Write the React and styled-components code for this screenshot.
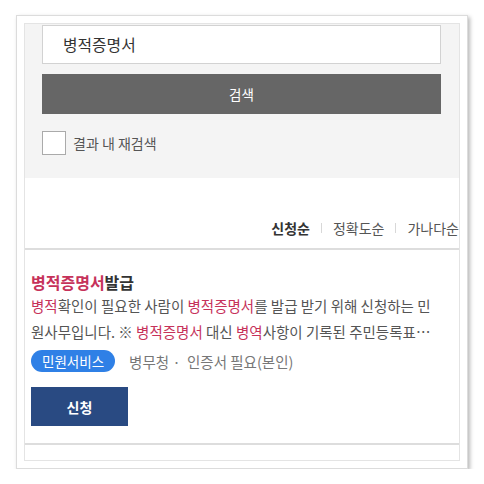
import React from "react";
import styled, { createGlobalStyle } from "styled-components";

const Global = createGlobalStyle`
  html, body {
    margin: 0;
    padding: 0;
    background: #fff;
  }
  body {
    font-family: "Noto Sans CJK KR", "Noto Sans", sans-serif;
    color: #333;
  }
`;

const Frame = styled.div`
  box-sizing: border-box;
  margin: 15px 0 0 16px;
  width: 452px;
  height: 454px;
  padding: 7px;
  background: #fff;
  border: 1px solid #dcdcdc;
  box-shadow: 2px 2px 4px rgba(0, 0, 0, 0.28);
`;

const Inner = styled.div`
  box-sizing: border-box;
  height: 438px;
  border: 1px solid #e4e4e4;
  overflow: hidden;
  display: flex;
  flex-direction: column;
`;

const SearchPanel = styled.div`
  background: #f4f4f4;
  padding: 1px 18px 23px 17px;
  display: flex;
  flex-direction: column;
`;

const Input = styled.div`
  box-sizing: border-box;
  height: 39px;
  background: #fff;
  border: 1px solid #d2d2d2;
  display: flex;
  align-items: center;
  padding-left: 20px;
  font-size: 15.8px;
  color: #333;
`;

const SearchButton = styled.div`
  margin-top: 10px;
  height: 40px;
  background: #666;
  color: #fff;
  font-size: 13.5px;
  display: flex;
  align-items: center;
  justify-content: center;
`;

const CheckRow = styled.label`
  margin-top: 17px;
  display: flex;
  align-items: center;
  gap: 7px;
  font-size: 14px;
  color: #555;
`;

const Box = styled.span`
  box-sizing: border-box;
  width: 24px;
  height: 24px;
  background: #fff;
  border: 1px solid #aaa;
`;

const SortBar = styled.div`
  height: 72px;
  display: flex;
  justify-content: flex-end;
  align-items: flex-end;
  padding-bottom: 10px;
  box-sizing: border-box;
  border-bottom: 2px solid #ddd;
  font-size: 14px;
  color: #555;
`;

const Sort = styled.span`
  font-weight: ${(p) => (p.active ? 700 : 400)};
  color: ${(p) => (p.active ? "#333" : "#555")};
  white-space: nowrap;
`;

const Sep = styled.span`
  width: 1px;
  height: 10px;
  background: #d8d8d8;
  margin: 0 11px 5px;
`;

const Item = styled.div`
  padding: 21px 22px 17px 6px;
  border-bottom: 2px solid #ddd;
`;

const Title = styled.div`
  font-size: 16px;
  font-weight: 700;
  line-height: 22px;
  color: #333;
`;

const Hl = styled.span`
  color: #c6325a;
`;

const Desc = styled.div`
  font-size: 14.5px;
  line-height: 26px;
  color: #555;
  display: -webkit-box;
  -webkit-line-clamp: 2;
  -webkit-box-orient: vertical;
  overflow: hidden;
`;

const Meta = styled.div`
  margin-top: 5px;
  display: flex;
  align-items: center;
  gap: 14px;
  font-size: 14.5px;
  color: #777;
`;

const Tag = styled.span`
  height: 22px;
  padding: 0 11px;
  border-radius: 11px;
  background: #2f80e6;
  color: #fff;
  font-size: 13.5px;
  display: flex;
  align-items: center;
`;

const ApplyButton = styled.div`
  margin-top: 15px;
  width: 97px;
  height: 39px;
  background: #294a82;
  color: #fff;
  font-size: 14px;
  font-weight: 700;
  display: flex;
  align-items: center;
  justify-content: center;
`;

export default function App() {
  return (
    <>
      <Global />
      <Frame>
        <Inner>
          <SearchPanel>
            <Input>병적증명서</Input>
            <SearchButton>검색</SearchButton>
            <CheckRow>
              <Box />
              결과 내 재검색
            </CheckRow>
          </SearchPanel>
          <SortBar>
            <Sort active>신청순</Sort>
            <Sep />
            <Sort>정확도순</Sort>
            <Sep />
            <Sort>가나다순</Sort>
          </SortBar>
          <Item>
            <Title>
              <Hl>병적증명서</Hl>발급
            </Title>
            <Desc>
              <Hl>병적</Hl>확인이 필요한 사람이 <Hl>병적증명서</Hl>를 발급 받기 위해 신청하는 민원사무입니다. ※ <Hl>병적증명서</Hl> 대신 <Hl>병역</Hl>사항이 기록된 주민등록표초본을 발급받을 수 있습니다.
            </Desc>
            <Meta>
              <Tag>민원서비스</Tag>
              <span>병무청 · &nbsp;인증서 필요(본인)</span>
            </Meta>
            <ApplyButton>신청</ApplyButton>
          </Item>
        </Inner>
      </Frame>
    </>
  );
}
